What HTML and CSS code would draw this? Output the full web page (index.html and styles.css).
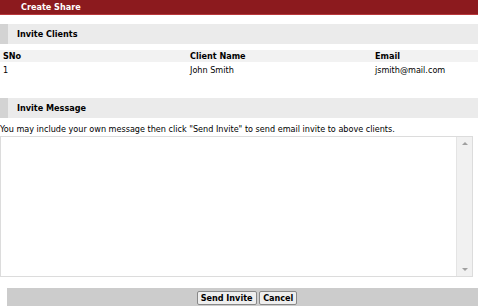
FILE: index.html
```html
<!DOCTYPE html>
<html lang="en">
<head>
    <meta charset="UTF-8">
    <title>Create Share</title>
    <link rel="stylesheet" href="styles.css">
</head>
<body>
    <div class="title-bar">Create Share</div>

    <div class="section-head">Invite Clients</div>
    <table class="clients">
        <tr>
            <th class="col-sno">SNo</th>
            <th class="col-name">Client Name</th>
            <th>Email</th>
        </tr>
        <tr>
            <td>1</td>
            <td>John Smith</td>
            <td>jsmith@mail.com</td>
        </tr>
    </table>

    <div class="section-head section-gap">Invite Message</div>
    <p class="note">You may include your own message then click "Send Invite" to send email invite to above clients.</p>
    <div class="message-box">
        <textarea class="message"></textarea>
        <div class="scroll-track">
            <span class="arrow arrow-up"></span>
            <span class="arrow arrow-down"></span>
        </div>
    </div>

    <div class="button-bar">
        <button class="btn">Send Invite</button>
        <button class="btn">Cancel</button>
    </div>
</body>
</html>
```

FILE: styles.css
```css
body {
    margin: 0;
    padding: 0;
    font-family: "DejaVu Sans Condensed", "DejaVu Sans", sans-serif;
    font-size: 9px;
    color: #000;
    background: #fff;
}

.title-bar {
    height: 14px;
    line-height: 14px;
    padding-left: 21px;
    background-color: #8c1a1e;
    border-bottom: 1px solid #b8373b;
    color: #fff;
    font-weight: bold;
}

.section-head {
    margin-top: 9px;
    height: 20px;
    line-height: 20px;
    padding-left: 9px;
    background-color: #ebebeb;
    border-left: 8px solid #d3d3d3;
    font-weight: bold;
}

.section-gap {
    margin-top: 23px;
}

.clients {
    width: 100%;
    margin-top: 6px;
    border-collapse: collapse;
}

.clients th {
    background-color: #f2f2f2;
    text-align: left;
    height: 12px;
    padding: 0 3px;
}

.clients td {
    padding: 3px 3px 0;
}

.col-sno {
    width: 181px;
}

.col-name {
    width: 179px;
}

.note {
    margin: 6px 0 0;
}

.message-box {
    display: flex;
    box-sizing: border-box;
    width: 473px;
    height: 141px;
    margin-top: 2px;
    border: 1px solid #dcdcdc;
}

.message {
    flex: 1;
    border: none;
    outline: none;
    resize: none;
    overflow: hidden;
    font-family: inherit;
    font-size: 9px;
}

.scroll-track {
    width: 15px;
    display: flex;
    flex-direction: column;
    justify-content: space-between;
    align-items: center;
    padding: 5px 0;
    background-color: #f1f1f1;
    border-left: 1px solid #e4e4e4;
}

.arrow {
    width: 0;
    height: 0;
    border-left: 3px solid transparent;
    border-right: 3px solid transparent;
}

.arrow-up {
    border-bottom: 3px solid #a0a0a0;
}

.arrow-down {
    border-top: 3px solid #a0a0a0;
}

.button-bar {
    margin: 11px 0 0 7px;
    padding: 3px 0 3px 9px;
    background-color: #cccccc;
    text-align: center;
}

.btn {
    font-family: "DejaVu Sans Condensed", "DejaVu Sans", sans-serif;
    font-size: 9px;
    font-weight: bold;
    line-height: 10px;
    margin: 0;
    padding: 1px 3px;
    background: #eeeeee;
    border: 1px solid #888;
    border-radius: 2px;
}
```
